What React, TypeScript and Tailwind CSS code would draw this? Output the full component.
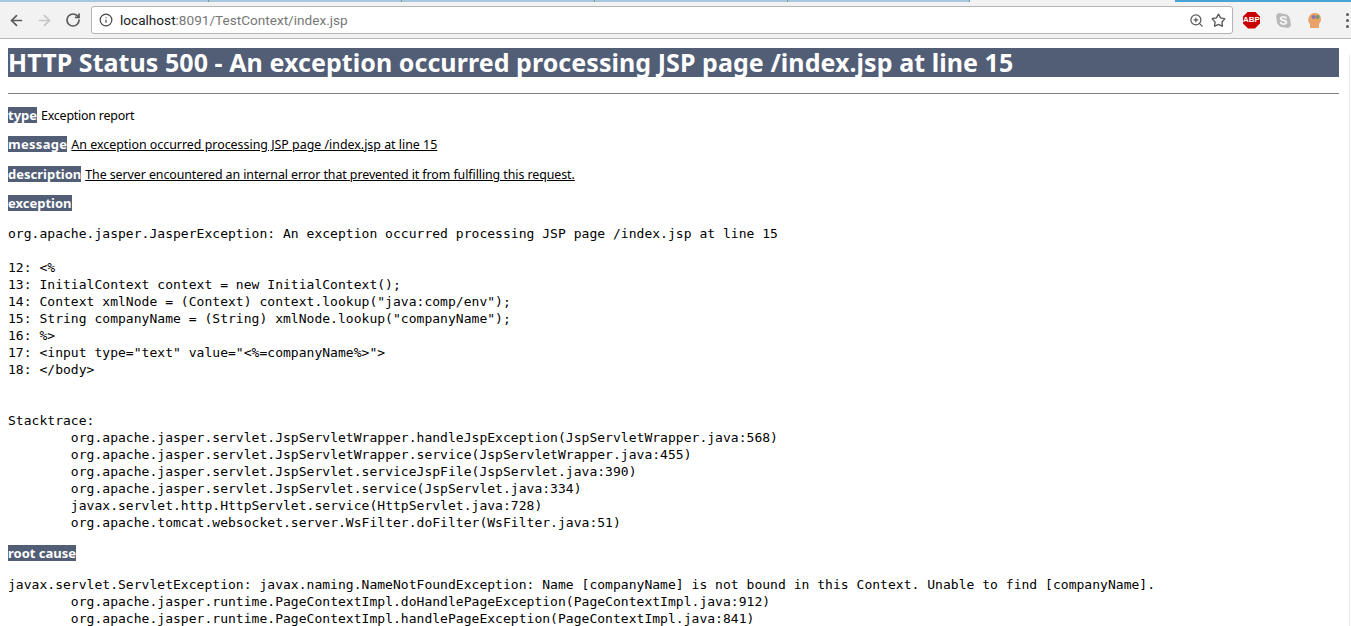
import React from 'react';
import { ArrowLeft, ArrowRight, RotateCw, Info, ZoomIn, Star } from 'lucide-react';
import { FaSkype } from 'react-icons/fa';

const exceptionText = `org.apache.jasper.JasperException: An exception occurred processing JSP page /index.jsp at line 15

12: <%
13: InitialContext context = new InitialContext();
14: Context xmlNode = (Context) context.lookup("java:comp/env");
15: String companyName = (String) xmlNode.lookup("companyName");
16: %>
17: <input type="text" value="<%=companyName%>">
18: </body>


Stacktrace:
\torg.apache.jasper.servlet.JspServletWrapper.handleJspException(JspServletWrapper.java:568)
\torg.apache.jasper.servlet.JspServletWrapper.service(JspServletWrapper.java:455)
\torg.apache.jasper.servlet.JspServlet.serviceJspFile(JspServlet.java:390)
\torg.apache.jasper.servlet.JspServlet.service(JspServlet.java:334)
\tjavax.servlet.http.HttpServlet.service(HttpServlet.java:728)
\torg.apache.tomcat.websocket.server.WsFilter.doFilter(WsFilter.java:51)`;

const rootCauseText = `javax.servlet.ServletException: javax.naming.NameNotFoundException: Name [companyName] is not bound in this Context. Unable to find [companyName].
\torg.apache.jasper.runtime.PageContextImpl.doHandlePageException(PageContextImpl.java:912)
\torg.apache.jasper.runtime.PageContextImpl.handlePageException(PageContextImpl.java:841)`;

const Row = ({ label, labelClass, text, textClass, margin = 'mb-[13px]' }: { label: string; labelClass?: string; text?: string; textClass?: string; margin?: string }) => (
  <p className={`flex h-[16px] text-[12.4px] leading-[16px] text-black whitespace-nowrap ${margin}`}>
    <b className={`bg-[#525d76] text-white font-bold text-[13px] ${labelClass ?? ''}`}>{label}</b>
    {text && <span className={`ml-[4px] translate-y-[1px] ${textClass ?? ''}`}>{text}</span>}
  </p>
);

const tabs = [209, 193, 193, 193, 182];

export default function App() {
  return (
    <div className="relative h-[626px] w-[1351px] overflow-hidden bg-white font-['Noto_Sans',sans-serif]">
      {/* Tab strip */}
      <div className="flex h-[2px] bg-[#f2f2f2]">
        {tabs.map((w, i) => (
          <div key={i} style={{ width: w }} className="shrink-0 bg-[#a9c8de] border-r border-[#7f8f9c]" />
        ))}
        <div className="w-[205px] shrink-0" />
        <div className="flex-1 bg-[#4aa3d8]" />
      </div>

      {/* Toolbar */}
      <div className="flex h-[37px] items-center bg-[#f2f2f2] border-b border-[#b8b8b8] pl-[8px] pr-[2px]">
        <ArrowLeft className="w-[17px] h-[17px] shrink-0 text-[#5a5a5a]" strokeWidth={2.4} />
        <ArrowRight className="w-[17px] h-[17px] shrink-0 ml-[11px] text-[#c4c4c4]" strokeWidth={2.4} />
        <RotateCw className="w-[16px] h-[16px] shrink-0 ml-[12px] text-[#5a5a5a]" strokeWidth={2.6} />
        <div className="flex h-[28px] w-[1142px] shrink-0 ml-[10px] items-center rounded-[3px] border border-[#b4b4b4] bg-white pl-[7px] pr-[6px]">
          <Info className="w-[14px] h-[14px] text-[#444444]" strokeWidth={2} />
          <span className="ml-[7px] text-[13.6px] font-['Roboto',sans-serif] text-[#777777] whitespace-nowrap">
            <span className="text-[#222222]">localhost</span>:8091/TestContext/index.jsp
          </span>
          <ZoomIn className="w-[15px] h-[15px] ml-auto text-[#5a5a5a]" strokeWidth={2} />
          <Star className="w-[15px] h-[15px] ml-[7px] text-[#5a5a5a]" strokeWidth={2.2} />
        </div>
        <div className="flex w-[17px] h-[17px] shrink-0 ml-[10px] items-center justify-center bg-[#c80000] [clip-path:polygon(30%_0,70%_0,100%_30%,100%_70%,70%_100%,30%_100%,0_70%,0_30%)] text-white text-[8px] font-['Liberation_Sans',sans-serif] font-bold leading-none">
          ABP
        </div>
        <FaSkype className="w-[17px] h-[17px] shrink-0 ml-[15px] text-[#b9b9b9]" />
        <svg className="w-[15px] h-[17px] shrink-0 ml-[15px]" viewBox="0 0 15 17">
          <path d="M3 16v-4C1 10 1 8 1.500 6 2.500 2 6 1 8 1c3 0 6 2 6 6 0 3-1.500 4-2 5v4z" fill="#e9a368" />
          <circle cx="6.500" cy="5" r="2" fill="#8f6fb0" />
          <circle cx="10.500" cy="5" r="2" fill="#6f9a78" />
        </svg>
        <div className="flex flex-col gap-[3px] shrink-0 ml-[24px]">
          <span className="w-[3px] h-[3px] rounded-full bg-[#5a5a5a]" />
          <span className="w-[3px] h-[3px] rounded-full bg-[#5a5a5a]" />
          <span className="w-[3px] h-[3px] rounded-full bg-[#5a5a5a]" />
        </div>
      </div>

      {/* Page */}
      <div className="w-[1347px] pt-[9px] px-[8px]">
        <h1 className="h-[29px] bg-[#525d76] text-white text-[25px] leading-[29px] font-bold tracking-[0.06px] whitespace-nowrap">
          HTTP Status 500 - An exception occurred processing JSP page /index.jsp at line 15
        </h1>
        <hr className="mt-[16px] mb-[13px] border-t border-[#808080]" />
        <Row label="type" text="Exception report" textClass="tracking-[-0.2px]" />
        <Row label="message" labelClass="tracking-[0.3px]" text="An exception occurred processing JSP page /index.jsp at line 15" textClass="underline" margin="mb-[14px]" />
        <Row label="description" text="The server encountered an internal error that prevented it from fulfilling this request." textClass="underline tracking-[-0.07px]" />
        <Row label="exception" />
        <pre className="mt-[14px] mb-[14px] font-['DejaVu_Sans_Mono',monospace] text-[13px] leading-[17px] tracking-[0.03px] [tab-size:8] text-black">{exceptionText}</pre>
        <div className="w-fit">
          <Row label="root cause" margin="mb-[15px]" />
        </div>
        <pre className="font-['DejaVu_Sans_Mono',monospace] text-[13px] leading-[17px] tracking-[0.03px] [tab-size:8] text-black">{rootCauseText}</pre>
      </div>

      {/* Scrollbar edge */}
      <div className="absolute right-[1px] top-[55px] bottom-0 w-[1px] bg-[#e6e6e6]" />
    </div>
  );
}
